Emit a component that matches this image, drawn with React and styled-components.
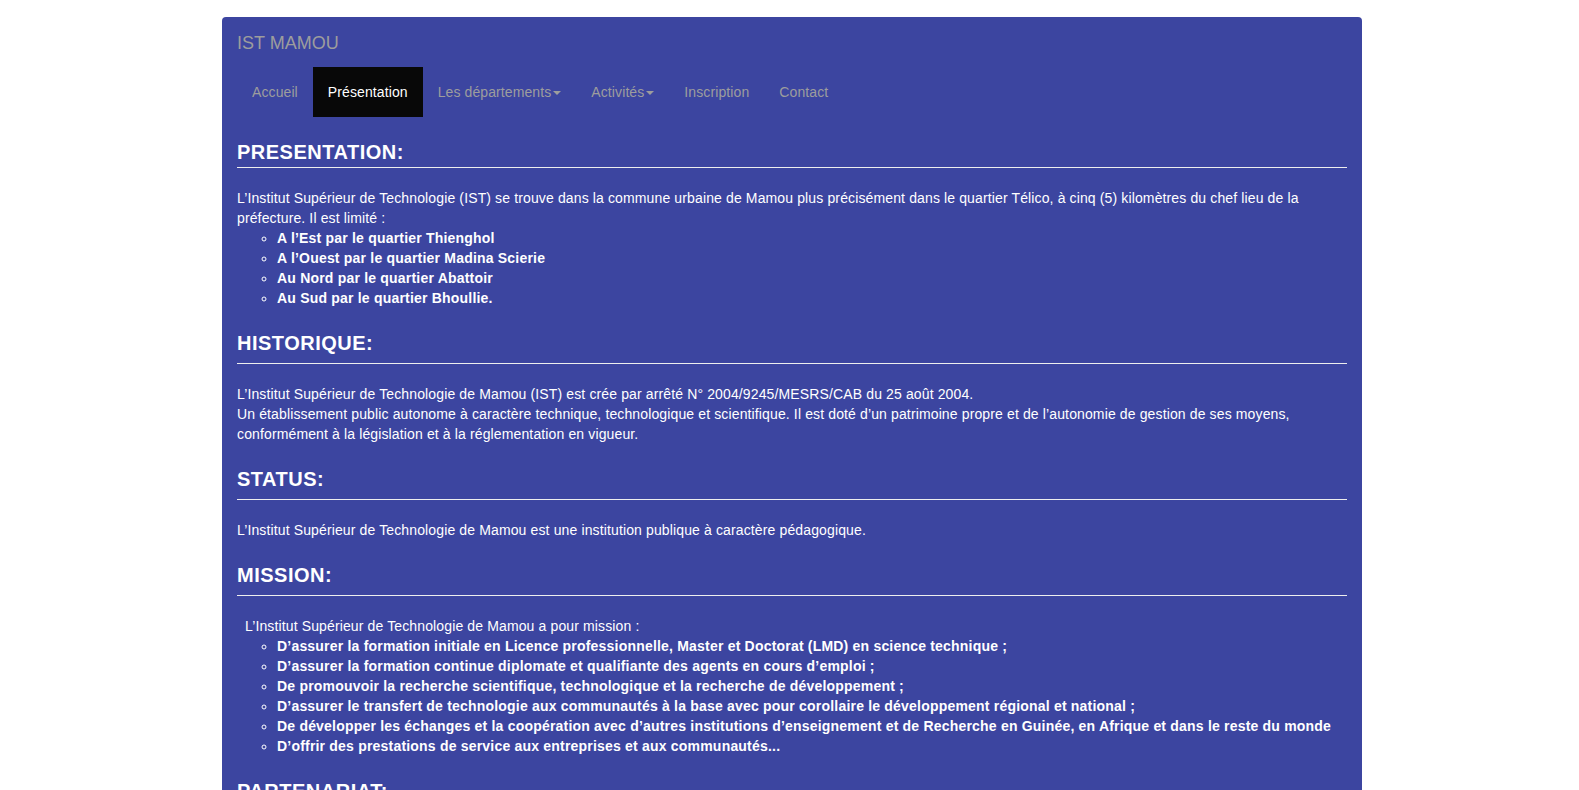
import styled, { createGlobalStyle } from "styled-components";

const GlobalStyle = createGlobalStyle`
  html, body {
    margin: 0;
    padding: 0;
    background: #fff;
    overflow: hidden;
  }
  body {
    font-family: "Liberation Sans", Arial, Helvetica, sans-serif;
    font-size: 14px;
    line-height: 20px;
    color: #fff;
  }
`;

const navItems = [
  { label: "Accueil" },
  { label: "Présentation", active: true },
  { label: "Les départements", caret: true },
  { label: "Activités", caret: true },
  { label: "Inscription" },
  { label: "Contact" },
];

const App = () => {
  return (
    <>
      <GlobalStyle />
      <Page>
        <Header>
          <Brand href="#">IST MAMOU</Brand>
        </Header>
        <Nav>
          {navItems.map((item) => (
            <NavItem key={item.label} $active={item.active}>
              {item.label}
              {item.caret && <Caret />}
            </NavItem>
          ))}
        </Nav>

        <Title>PRESENTATION:</Title>
        <Rule $first />
        <Text>
          L’Institut Supérieur de Technologie (IST) se trouve dans la commune urbaine de Mamou plus
          précisément dans le quartier Télico, à cinq (5) kilomètres du chef lieu de la préfecture. Il
          est limité :
        </Text>
        <List>
          <li>A l’Est par le quartier Thienghol</li>
          <li>A l’Ouest par le quartier Madina Scierie</li>
          <li>Au Nord par le quartier Abattoir</li>
          <li>Au Sud par le quartier Bhoullie.</li>
        </List>

        <Title>HISTORIQUE:</Title>
        <Rule />
        <Text>
          L’Institut Supérieur de Technologie de Mamou (IST) est crée par arrêté N° 2004/9245/MESRS/CAB
          du 25 août 2004.
          <br />
          Un établissement public autonome à caractère technique, technologique et scientifique. Il est
          doté d’un patrimoine propre et de l’autonomie de gestion de ses moyens, conformément à la
          législation et à la réglementation en vigueur.
        </Text>

        <Title>STATUS:</Title>
        <Rule />
        <Text>
          L’Institut Supérieur de Technologie de Mamou est une institution publique à caractère
          pédagogique.
        </Text>

        <Title>MISSION:</Title>
        <Rule />
        <Text $indent>L’Institut Supérieur de Technologie de Mamou a pour mission :</Text>
        <List>
          <li>
            D’assurer la formation initiale en Licence professionnelle, Master et Doctorat (LMD) en
            science technique ;
          </li>
          <li>
            D’assurer la formation continue diplomate et qualifiante des agents en cours d’emploi ;
          </li>
          <li>
            De promouvoir la recherche scientifique, technologique et la recherche de développement ;
          </li>
          <li>
            D’assurer le transfert de technologie aux communautés à la base avec pour corollaire le
            développement régional et national ;
          </li>
          <li>
            De développer les échanges et la coopération avec d’autres institutions d’enseignement et de
            Recherche en Guinée, en Afrique et dans le reste du monde
          </li>
          <li>D’offrir des prestations de service aux entreprises et aux communautés...</li>
        </List>

        <Title>PARTENARIAT:</Title>
        <Rule />
      </Page>
    </>
  );
};

const Page = styled.div`
  box-sizing: border-box;
  width: 1140px;
  margin: 17px 0 0 222px;
  padding: 0 15px 40px;
  background: #3c45a0;
  border-radius: 4px 4px 0 0;
`;

const Header = styled.div`
  height: 50px;
  display: flex;
  align-items: center;
`;

const Brand = styled.a`
  font-size: 18px;
  line-height: 20px;
  color: #9d9d9d;
  text-decoration: none;
  padding-top: 1px;
`;

const Nav = styled.ul`
  display: flex;
  margin: 0;
  padding: 0;
  list-style: none;
`;

const NavItem = styled.li`
  display: flex;
  align-items: center;
  height: 50px;
  padding: 0 15px;
  box-sizing: border-box;
  letter-spacing: 0.1px;
  color: ${(p) => (p.$active ? "#fff" : "#9d9d9d")};
  background: ${(p) => (p.$active ? "#080808" : "transparent")};
  cursor: pointer;
`;

const Caret = styled.span`
  display: inline-block;
  width: 0;
  height: 0;
  margin-left: 2px;
  margin-top: 2px;
  border-top: 4px solid currentColor;
  border-left: 4px solid transparent;
  border-right: 4px solid transparent;
`;

const Title = styled.h3`
  margin: 24px 0 0;
  font-size: 20px;
  line-height: 22px;
  font-weight: bold;
  letter-spacing: 0.5px;
  color: #fff;
`;

const Rule = styled.hr`
  margin: ${(p) => (p.$first ? "4px" : "9px")} 0 20px;
  border: 0;
  border-top: 1px solid #eee;
`;

const Text = styled.p`
  margin: 0;
  letter-spacing: 0.13px;
  padding-left: ${(p) => (p.$indent ? "8px" : "0")};
`;

const List = styled.ul`
  margin: 0;
  padding-left: 40px;
  list-style: circle;
  font-weight: bold;
  letter-spacing: 0.2px;
`;

export default App;
